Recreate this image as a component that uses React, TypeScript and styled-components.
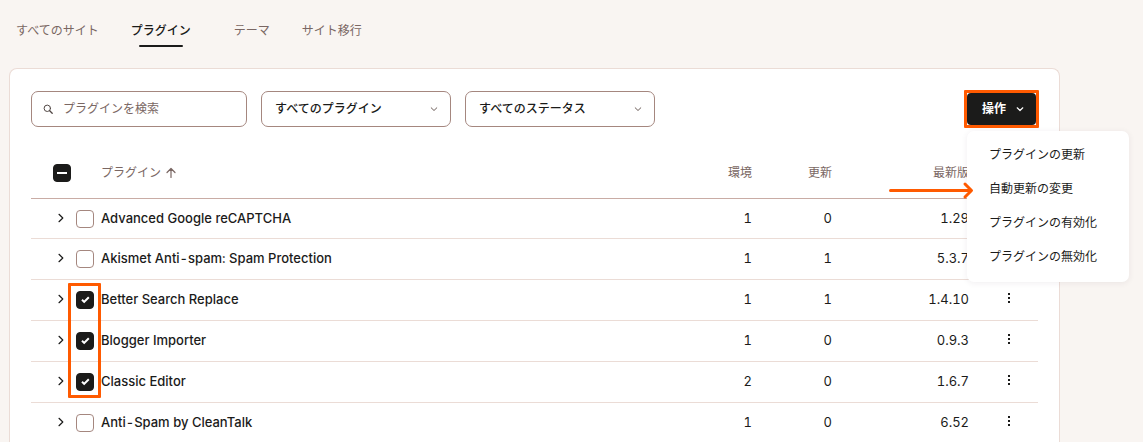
import React, { useEffect, useRef, useState } from "react";
import styled, { createGlobalStyle } from "styled-components";

const color = {
  page: "#f9f5f2",
  ink: "#1b1b1a",
  muted: "#7a6763",
  line: "#ebdcd6",
  headLine: "#c9aca5",
  control: "#a5877f",
  mark: "#ff5a00",
};

const GlobalStyle = createGlobalStyle`
  *, *::before, *::after { box-sizing: border-box; }
  body {
    margin: 0;
    background: ${color.page};
    color: ${color.ink};
    font-family: Inter, "Noto Sans CJK JP", sans-serif;
    font-size: 12px;
    line-height: 16px;
  }
  button, input, select { font: inherit; color: inherit; }
`;

const Page = styled.div`
  padding: 23px 83px 0 9px;
`;

const Tabs = styled.nav`
  display: flex;
  gap: 32px;
  padding-left: 7px;
  margin-bottom: 21px;
`;

const Tab = styled.a<{ $active?: boolean }>`
  display: flex;
  flex-direction: column;
  align-items: center;
  gap: 6px;
  height: 24px;
  margin-right: ${(p) => (p.$active ? "11px" : "0")};
  color: ${(p) => (p.$active ? color.ink : color.muted)};
  font-weight: ${(p) => (p.$active ? 500 : 400)};
  text-decoration: none;
  white-space: nowrap;

  &::after {
    content: "";
    width: ${(p) => (p.$active ? "44px" : "0")};
    height: 2px;
    border-radius: 1px;
    background: ${color.ink};
  }
`;

const Panel = styled.main`
  padding: 22px 21px 0;
  min-height: calc(100vh - 68px);
  background: #fff;
  border: 1px solid ${color.line};
  border-bottom: 0;
  border-radius: 8px 8px 0 0;
`;

const Toolbar = styled.div`
  display: flex;
  align-items: center;
  gap: 14px;
  margin-bottom: 18px;
`;

const Field = styled.label<{ $width: number }>`
  display: flex;
  align-items: center;
  position: relative;
  width: ${(p) => p.$width}px;
  height: 36px;

  svg { position: absolute; pointer-events: none; }
`;

const SearchInput = styled.input`
  width: 100%;
  height: 36px;
  padding: 0 12px 2px 31px;
  border: 1px solid ${color.control};
  border-radius: 7px;
  background: #fff;
  outline: none;

  &::placeholder { color: ${color.muted}; opacity: 1; }
`;

const SearchIcon = styled.svg`
  left: 12px;
`;

const Select = styled.select`
  appearance: none;
  width: 100%;
  height: 36px;
  padding: 0 32px 0 13px;
  border: 1px solid ${color.control};
  border-radius: 7px;
  background: #fff;
  font-weight: 500;
`;

const SelectIcon = styled.svg`
  right: 13px;
`;

const Actions = styled.div`
  position: relative;
  margin-left: auto;
  margin-right: 2px;
`;

const ActionButton = styled.button`
  display: flex;
  align-items: center;
  gap: 10px;
  height: 32px;
  padding: 0 12px 0 15px;
  border: 0;
  border-radius: 4px;
  background: ${color.ink};
  color: #fff;
  font-weight: 700;
  white-space: nowrap;
`;

const ButtonFrame = styled.span`
  position: absolute;
  inset: -3px;
  border: 3px solid ${color.mark};
  border-radius: 1px;
  pointer-events: none;
`;

const Menu = styled.ul`
  position: absolute;
  z-index: 2;
  top: 38px;
  left: 0;
  width: 162px;
  margin: 0;
  padding: 6px 0 9px;
  list-style: none;
  background: #fff;
  border-radius: 7px;
  box-shadow: 0 1px 6px rgba(60, 40, 60, 0.08);
`;

const MenuItem = styled.li`
  position: relative;
`;

const MenuButton = styled.button`
  width: 100%;
  height: 34px;
  padding: 2px 21px 0 22px;
  border: 0;
  background: none;
  text-align: left;
  white-space: nowrap;
`;

const Arrow = styled.svg`
  position: absolute;
  top: 9px;
  left: -80px;
  pointer-events: none;
`;

const Table = styled.table`
  width: 100%;
  table-layout: fixed;
  border-collapse: separate;
  border-spacing: 0;
  font-size: 13px;
  font-variant-numeric: tabular-nums;
`;

const Col = styled.col<{ $width?: number }>`
  width: ${(p) => (p.$width ? `${p.$width}px` : "auto")};
`;

const HeadCell = styled.th<{ $align?: string; $indent?: number }>`
  height: 54px;
  padding: 2px 0 0 ${(p) => p.$indent ?? 0}px;
  border-bottom: 1px solid ${color.headLine};
  color: ${color.muted};
  font-size: 12px;
  font-weight: 400;
  text-align: ${(p) => p.$align ?? "left"};
`;

const Row = styled.tr`
  height: 41px;

  &:first-child { height: 40px; }
`;

const Cell = styled.td<{ $align?: string; $indent?: number; $strong?: boolean; $lift?: number }>`
  position: relative;
  padding: 0 0 ${(p) => p.$lift ?? 2}px ${(p) => p.$indent ?? 0}px;
  border-bottom: 1px solid ${color.line};
  font-weight: ${(p) => (p.$strong ? 500 : 400)};
  text-align: ${(p) => p.$align ?? "left"};
`;

const SortButton = styled.button`
  display: flex;
  align-items: center;
  gap: 5px;
  padding: 0;
  border: 0;
  background: none;
`;

const IconButton = styled.button`
  display: flex;
  align-items: center;
  justify-content: center;
  width: 16px;
  height: 20px;
  padding: 0;
  border: 0;
  background: none;
`;

const CheckWrap = styled.span`
  display: flex;
  position: relative;
  width: 18px;
  height: 18px;

  svg { position: absolute; top: 0; left: 0; pointer-events: none; }
`;

const CheckInput = styled.input<{ $filled: boolean }>`
  appearance: none;
  width: 18px;
  height: 18px;
  margin: 0;
  border: 1px solid ${(p) => (p.$filled ? color.ink : color.control)};
  border-radius: 4px;
  background: ${(p) => (p.$filled ? color.ink : "#fff")};
`;

const SelectionFrame = styled.span`
  position: absolute;
  z-index: 1;
  top: 3px;
  left: -4px;
  width: 33px;
  height: 115px;
  border: 3px solid ${color.mark};
  border-radius: 1px;
  pointer-events: none;
`;

const ChevronDown = () => (
  <svg width="8" height="8" viewBox="0 0 8 8" fill="none" stroke="currentColor" strokeWidth="1.2" strokeLinecap="round" strokeLinejoin="round">
    <path d="M1.2 2.8 4 5.5 6.8 2.8" />
  </svg>
);

const SelectChevron = () => (
  <SelectIcon width="8" height="8" viewBox="0 0 8 8" fill="none" stroke="#6b5c58" strokeLinecap="round" strokeLinejoin="round">
    <path d="M1.2 2.8 4 5.5 6.8 2.8" />
  </SelectIcon>
);

function Checkbox(props: { label: string; checked: boolean; mixed?: boolean; onChange: () => void }) {
  const ref = useRef<HTMLInputElement>(null);
  const mixed = !!props.mixed;
  useEffect(() => {
    if (ref.current) ref.current.indeterminate = mixed;
  }, [mixed]);
  return (
    <CheckWrap>
      <CheckInput
        ref={ref}
        type="checkbox"
        aria-label={props.label}
        checked={props.checked}
        $filled={props.checked || mixed}
        onChange={props.onChange}
      />
      {(mixed || props.checked) && (
        <svg width="18" height="18" viewBox="0 0 18 18" fill="none" stroke="#fff" strokeWidth="2">
          <path d={mixed ? "M4 9h10" : "M6 8.7 8.2 10.9 12.8 6.2"} />
        </svg>
      )}
    </CheckWrap>
  );
}

const tabs = ["すべてのサイト", "プラグイン", "テーマ", "サイト移行"];
const actions = ["プラグインの更新", "自動更新の変更", "プラグインの有効化", "プラグインの無効化"];
const plugins = [
  { name: "Advanced Google reCAPTCHA", envs: 1, updates: 0, version: "1.29" },
  { name: "Akismet Anti-spam: Spam Protection", envs: 1, updates: 1, version: "5.3.7" },
  { name: "Better Search Replace", envs: 1, updates: 1, version: "1.4.10" },
  { name: "Blogger Importer", envs: 1, updates: 0, version: "0.9.3" },
  { name: "Classic Editor", envs: 2, updates: 0, version: "1.6.7" },
  { name: "Anti-Spam by CleanTalk", envs: 1, updates: 0, version: "6.52" },
];

export default function App() {
  const [selected, setSelected] = useState<number[]>([2, 3, 4]);
  const all = selected.length === plugins.length;
  const toggle = (i: number) =>
    setSelected((s) => (s.includes(i) ? s.filter((n) => n !== i) : [...s, i]));

  return (
    <>
      <GlobalStyle />
      <Page>
        <Tabs>
          {tabs.map((t, i) => (
            <Tab key={t} href="#" $active={i === 1}>{t}</Tab>
          ))}
        </Tabs>
        <Panel>
          <Toolbar>
            <Field $width={216}>
              <SearchInput type="search" placeholder="プラグインを検索" aria-label="プラグインを検索" />
              <SearchIcon width="10" height="10" viewBox="0 0 10 10" fill="none" stroke="#514744" strokeLinecap="round">
                <circle cx="4.3" cy="4.3" r="3.2" />
                <path d="M6.7 6.7 9.2 9.2" strokeWidth="1.3" />
              </SearchIcon>
            </Field>
            <Field $width={190}>
              <Select aria-label="プラグイン">
                <option>すべてのプラグイン</option>
              </Select>
              <SelectChevron />
            </Field>
            <Field $width={190}>
              <Select aria-label="ステータス">
                <option>すべてのステータス</option>
              </Select>
              <SelectChevron />
            </Field>
            <Actions>
              <ActionButton type="button" aria-expanded="true">
                操作
                <ChevronDown />
              </ActionButton>
              <ButtonFrame />
              <Menu>
                {actions.map((a, i) => (
                  <MenuItem key={a}>
                    <MenuButton type="button">{a}</MenuButton>
                    {i === 1 && (
                      <Arrow width="88" height="20" viewBox="0 0 88 20" fill="none" stroke={color.mark} strokeWidth="3" strokeLinecap="round" strokeLinejoin="round">
                        <path d="M3.5 10.5H84M78 4 84.5 10.5 78 17" />
                      </Arrow>
                    )}
                  </MenuItem>
                ))}
              </Menu>
            </Actions>
          </Toolbar>
          <Table>
            <colgroup>
              <Col $width={41} />
              <Col $width={29} />
              <Col />
              <Col $width={100} />
              <Col $width={80} />
              <Col $width={137} />
              <Col $width={69} />
            </colgroup>
            <thead>
              <tr>
                <HeadCell colSpan={2} $indent={22}>
                  <Checkbox
                    label="すべて選択"
                    checked={all}
                    mixed={selected.length > 0 && !all}
                    onChange={() => setSelected(all ? [] : plugins.map((_, i) => i))}
                  />
                </HeadCell>
                <HeadCell>
                  <SortButton type="button">
                    プラグイン
                    <svg width="10" height="12" viewBox="0 0 10 12" fill="none" stroke="currentColor" strokeWidth="1.2" strokeLinecap="round" strokeLinejoin="round">
                      <path d="M5 10.5V2M1 5.5 5 1.5 9 5.5" />
                    </svg>
                  </SortButton>
                </HeadCell>
                <HeadCell $align="right">環境</HeadCell>
                <HeadCell $align="right">更新</HeadCell>
                <HeadCell $align="right">最新版</HeadCell>
                <HeadCell />
              </tr>
            </thead>
            <tbody>
              {plugins.map((p, i) => (
                <Row key={p.name}>
                  <Cell $indent={22}>
                    <IconButton type="button" aria-label={`${p.name} の詳細`}>
                      <svg width="8" height="10" viewBox="0 0 8 10" fill="none" stroke="currentColor" strokeWidth="1.2" strokeLinecap="round" strokeLinejoin="round">
                        <path d="M2 1.3 5.8 5 2 8.7" />
                      </svg>
                    </IconButton>
                  </Cell>
                  <Cell $indent={4} $lift={0}>
                    <Checkbox label={p.name} checked={selected.includes(i)} onChange={() => toggle(i)} />
                    {i === 2 && <SelectionFrame />}
                  </Cell>
                  <Cell $strong>{p.name}</Cell>
                  <Cell $align="right">{p.envs}</Cell>
                  <Cell $align="right">{p.updates}</Cell>
                  <Cell $align="right">{p.version}</Cell>
                  <Cell $indent={32} $lift={4}>
                    <IconButton type="button" aria-label={`${p.name} のメニュー`}>
                      <svg width="4" height="12" viewBox="0 0 4 12" fill="currentColor">
                        <path d="M1 1h2v2H1zM1 5h2v2H1zM1 9h2v2H1z" />
                      </svg>
                    </IconButton>
                  </Cell>
                </Row>
              ))}
            </tbody>
          </Table>
        </Panel>
      </Page>
    </>
  );
}
